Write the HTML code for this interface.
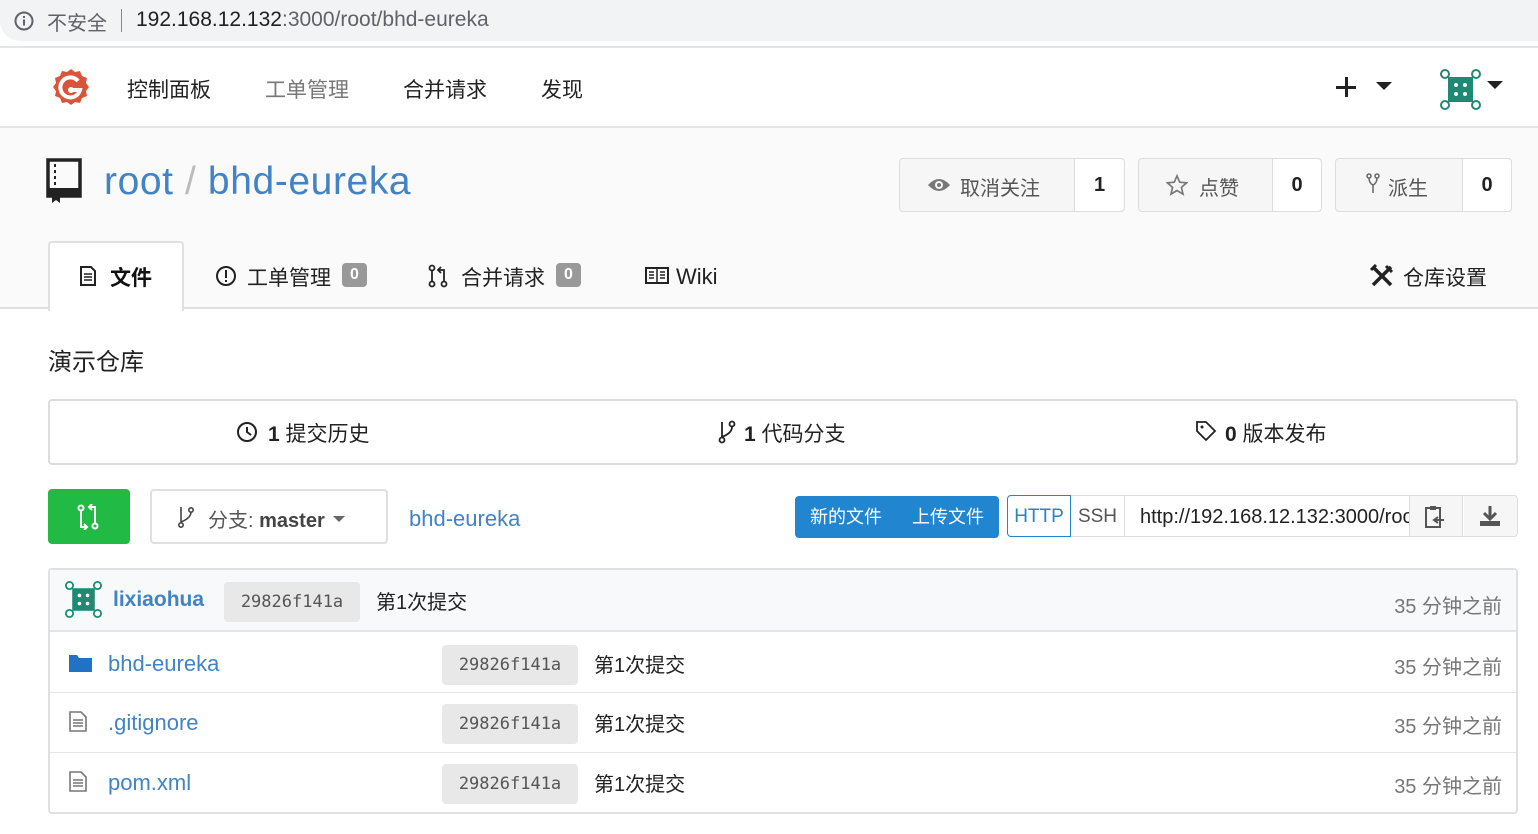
<!DOCTYPE html>
<html><head><meta charset="utf-8"><style>
*{box-sizing:border-box;margin:0;padding:0}
body{width:1538px;height:834px;overflow:hidden;background:#fff;font-family:"Liberation Sans","Noto Sans CJK SC",sans-serif;color:#333;position:relative}
.a{position:absolute;white-space:nowrap}
.blue{color:#4183c4}
.box{position:absolute;border:1px solid #ddd;border-radius:4px}
.sha{position:absolute;background:#e8e8e8;border-radius:4px;color:#555;height:40px;line-height:40px;text-align:center;width:136px;font-family:"DejaVu Sans Mono","Liberation Mono",monospace;font-size:17px}
.msg{font-size:20px;color:#222}
.time{font-size:20px;color:#777;right:38px}
</style></head><body>
<div class="a" style="left:0;top:0;width:1538px;height:41px;background:#f1f3f4;border-radius:0 0 0 20px"></div>
<div class="a" style="left:0;top:46px;width:1538px;height:2px;background:#e5e5e5"></div>
<svg class="a" style="left:13px;top:10px" width="22" height="22" viewBox="0 0 22 22"><circle cx="11" cy="11" r="8.5" fill="none" stroke="#5f6368" stroke-width="2"/><rect x="10" y="9.5" width="2" height="6" fill="#5f6368"/><rect x="10" y="6" width="2" height="2" fill="#5f6368"/></svg>
<div class="a" style="left:47px;top:7px;font-size:20px;color:#5f6368">不安全</div>
<div class="a" style="left:121px;top:9px;width:1px;height:23px;background:#888"></div>
<div class="a" style="left:136px;top:8px;font-size:21px;color:#202124">192.168.12.132<span style="color:#5f6368">:3000/root/bhd-eureka</span></div>
<svg class="a" style="left:50px;top:67px" width="42" height="42" viewBox="0 0 42 42"><path d="M21 2l4 3 5-1 2 5 5 2-1 5 3 4-3 4 1 5-5 2-2 5-5-1-4 3-4-3-5 1-2-5-5-2 1-5-3-4 3-4-1-5 5-2 2-5 5 1z" fill="#d9553a"/><path d="M28 14a10 10 0 1 0 2 9h-9" fill="none" stroke="#fff" stroke-width="4"/><circle cx="21" cy="23" r="3" fill="#fff"/></svg>
<div class="a" style="left:127px;top:74px;font-size:21px;color:#222">控制面板</div>
<div class="a" style="left:265px;top:74px;font-size:21px;color:#777">工单管理</div>
<div class="a" style="left:403px;top:74px;font-size:21px;color:#222">合并请求</div>
<div class="a" style="left:541px;top:74px;font-size:21px;color:#222">发现</div>
<div class="a" style="left:1336px;top:86px;width:20px;height:3px;background:#222"></div>
<div class="a" style="left:1344.5px;top:77px;width:3px;height:20px;background:#222"></div>
<div class="a" style="left:1376px;top:82px;border:8px solid transparent;border-top:8px solid #222;border-bottom:0"></div>
<svg class="a" style="left:1440px;top:69px" width="41" height="41" viewBox="0 0 41 41"><rect x="8" y="8" width="25" height="25" fill="#1e8a73"/><g fill="#1e8a73"><circle cx="5" cy="5" r="5"/><circle cx="36" cy="5" r="5"/><circle cx="5" cy="36" r="5"/><circle cx="36" cy="36" r="5"/></g><g fill="#fff"><circle cx="5" cy="5" r="3"/><circle cx="36" cy="5" r="3"/><circle cx="5" cy="36" r="3"/><circle cx="36" cy="36" r="3"/><circle cx="16" cy="16" r="2"/><circle cx="25" cy="16" r="2"/><circle cx="16" cy="25" r="2"/><circle cx="25" cy="25" r="2"/></g></svg>
<div class="a" style="left:1487px;top:81px;border:8px solid transparent;border-top:8px solid #222;border-bottom:0"></div>
<div class="a" style="left:0;top:126px;width:1538px;height:183px;background:#fafafa;border-top:2px solid #e4e4e4;border-bottom:2px solid #e0e0e0"></div>
<svg class="a" style="left:46px;top:158px" width="36" height="46" viewBox="0 0 36 46"><rect x="2" y="2" width="32" height="36" fill="none" stroke="#222" stroke-width="3.5"/><rect x="2" y="30" width="32" height="8" fill="#222"/><rect x="8" y="6" width="2" height="3" fill="#222"/><rect x="8" y="12" width="2" height="3" fill="#222"/><rect x="8" y="18" width="2" height="3" fill="#222"/><rect x="8" y="24" width="2" height="3" fill="#222"/><path d="M6 36h8v9l-4-3-4 3z" fill="#222"/></svg>
<div class="a blue" style="left:104px;top:160px;font-size:39px;letter-spacing:0.6px">root <span style="color:#bbb">/</span> bhd-eureka</div>
<div class="box" style="left:899px;top:158px;width:226px;height:54px;background:#f6f6f6"></div>
<div class="a" style="left:1074px;top:159px;width:50px;height:52px;background:#fff;border-left:1px solid #ddd;border-radius:0 4px 4px 0;font-size:20px;font-weight:bold;text-align:center;line-height:52px;color:#222">1</div>
<svg class="a" style="left:927px;top:177px" width="24" height="16" viewBox="0 0 24 16"><path d="M1 8Q12-4 23 8Q12 20 1 8z" fill="#777"/><circle cx="12" cy="8" r="4" fill="#f6f6f6"/><circle cx="12" cy="8" r="2" fill="#777"/></svg>
<div class="a" style="left:960px;top:172px;font-size:20px;color:#555">取消关注</div>
<div class="box" style="left:1138px;top:158px;width:184px;height:54px;background:#f6f6f6"></div>
<div class="a" style="left:1272px;top:159px;width:49px;height:52px;background:#fff;border-left:1px solid #ddd;border-radius:0 4px 4px 0;font-size:20px;font-weight:bold;text-align:center;line-height:52px;color:#222">0</div>
<svg class="a" style="left:1166px;top:174px" width="22" height="22" viewBox="0 0 24 24"><path d="M12 2l3 7 7.5.6-5.7 5 1.8 7.4L12 18l-6.6 4 1.8-7.4-5.7-5L9 9z" fill="none" stroke="#777" stroke-width="1.8"/></svg>
<div class="a" style="left:1199px;top:172px;font-size:20px;color:#555">点赞</div>
<div class="box" style="left:1335px;top:158px;width:177px;height:54px;background:#f6f6f6"></div>
<div class="a" style="left:1462px;top:159px;width:49px;height:52px;background:#fff;border-left:1px solid #ddd;border-radius:0 4px 4px 0;font-size:20px;font-weight:bold;text-align:center;line-height:52px;color:#222">0</div>
<svg class="a" style="left:1366px;top:173px" width="14" height="22" viewBox="0 0 14 22"><circle cx="3" cy="3" r="2" fill="none" stroke="#666" stroke-width="1.5"/><circle cx="11" cy="3" r="2" fill="none" stroke="#666" stroke-width="1.5"/><path d="M3 5q0 5 4 7q4-2 4-7M7 12v8" fill="none" stroke="#666" stroke-width="1.5"/></svg>
<div class="a" style="left:1388px;top:172px;font-size:20px;color:#555">派生</div>
<div class="a" style="left:48px;top:241px;width:136px;height:70px;background:#fff;border:2px solid #e0e0e0;border-bottom:none;border-radius:4px 4px 0 0"></div>
<svg class="a" style="left:79px;top:266px" width="18" height="20" viewBox="0 0 18 20"><path d="M2 1h10l4 4v14H2z" fill="none" stroke="#222" stroke-width="2"/><path d="M5 8h8M5 11h8M5 14h8" stroke="#222" stroke-width="1.5"/></svg>
<div class="a" style="left:110px;top:262px;font-size:21px;font-weight:bold;color:#111">文件</div>
<svg class="a" style="left:215px;top:265px" width="22" height="22" viewBox="0 0 22 22"><circle cx="11" cy="11" r="9" fill="none" stroke="#222" stroke-width="2"/><rect x="10" y="5" width="2" height="8" fill="#222"/><rect x="10" y="15" width="2" height="2" fill="#222"/></svg>
<div class="a" style="left:247px;top:262px;font-size:21px;color:#222">工单管理</div>
<div class="a" style="left:342px;top:263px;width:25px;height:24px;background:#999;border-radius:4px;color:#fff;font-weight:bold;font-size:16px;text-align:center;line-height:24px">0</div>
<svg class="a" style="left:428px;top:264px" width="20" height="24" viewBox="0 0 20 24"><circle cx="4" cy="4" r="2.5" fill="none" stroke="#222" stroke-width="1.8"/><circle cx="4" cy="20" r="2.5" fill="none" stroke="#222" stroke-width="1.8"/><circle cx="16" cy="20" r="2.5" fill="none" stroke="#222" stroke-width="1.8"/><path d="M4 7v10M16 17V6h-5M13 3l-3 3 3 3" fill="none" stroke="#222" stroke-width="1.8"/></svg>
<div class="a" style="left:461px;top:262px;font-size:21px;color:#222">合并请求</div>
<div class="a" style="left:556px;top:263px;width:25px;height:24px;background:#999;border-radius:4px;color:#fff;font-weight:bold;font-size:16px;text-align:center;line-height:24px">0</div>
<svg class="a" style="left:645px;top:267px" width="24" height="17" viewBox="0 0 24 17"><rect x="1" y="1" width="22" height="15" fill="none" stroke="#222" stroke-width="2"/><path d="M12 1v15M4 5h5M4 8h5M4 11h5M15 5h5M15 8h5M15 11h5" stroke="#222" stroke-width="1.5"/></svg>
<div class="a" style="left:676px;top:264px;font-size:22px;color:#222">Wiki</div>
<svg class="a" style="left:1370px;top:264px" width="24" height="24" viewBox="0 0 24 24"><path d="M3 3l18 18M21 3L3 21" stroke="#222" stroke-width="3.5"/><path d="M16 2l6 6M1 6l5-5" stroke="#222" stroke-width="3"/></svg>
<div class="a" style="left:1403px;top:262px;font-size:21px;color:#222">仓库设置</div>
<div class="a" style="left:48px;top:342px;font-size:24px;color:#222">演示仓库</div>
<div class="box" style="left:48px;top:399px;width:1470px;height:66px;border:2px solid #ddd"></div>
<svg class="a" style="left:236px;top:421px" width="22" height="22" viewBox="0 0 22 22"><circle cx="11" cy="11" r="9" fill="none" stroke="#222" stroke-width="2"/><path d="M11 6v5l4 3" fill="none" stroke="#222" stroke-width="2"/></svg>
<div class="a" style="left:268px;top:418px;font-size:21px;color:#222"><b>1</b> 提交历史</div>
<svg class="a" style="left:718px;top:420px" width="18" height="24" viewBox="0 0 18 24"><circle cx="4" cy="20" r="2.5" fill="none" stroke="#222" stroke-width="1.8"/><circle cx="14" cy="4" r="2.5" fill="none" stroke="#222" stroke-width="1.8"/><path d="M4 2v15M14 7q0 6-10 10" fill="none" stroke="#222" stroke-width="1.8"/></svg>
<div class="a" style="left:744px;top:418px;font-size:21px;color:#222"><b>1</b> 代码分支</div>
<svg class="a" style="left:1195px;top:420px" width="22" height="22" viewBox="0 0 22 22"><path d="M2 2h9l9 9-9 9-9-9z" fill="none" stroke="#222" stroke-width="1.8"/><circle cx="7" cy="7" r="1.5" fill="#222"/></svg>
<div class="a" style="left:1225px;top:418px;font-size:21px;color:#222"><b>0</b> 版本发布</div>
<div class="a" style="left:48px;top:489px;width:82px;height:55px;background:#21ba45;border-radius:4px"></div>
<svg class="a" style="left:76px;top:504px" width="24" height="26" viewBox="0 0 24 26"><circle cx="5" cy="4" r="2.5" fill="none" stroke="#fff" stroke-width="2"/><circle cx="19" cy="22" r="2.5" fill="none" stroke="#fff" stroke-width="2"/><path d="M5 7v16h6M8 20l3 3-3 3M19 19V3h-6M16 0l-3 3 3 3" fill="none" stroke="#fff" stroke-width="2"/></svg>
<div class="box" style="left:150px;top:489px;width:238px;height:55px;border:2px solid #e0e0e0"></div>
<svg class="a" style="left:178px;top:506px" width="16" height="22" viewBox="0 0 16 22"><circle cx="3" cy="19" r="2.2" fill="none" stroke="#444" stroke-width="1.6"/><circle cx="13" cy="4" r="2.2" fill="none" stroke="#444" stroke-width="1.6"/><path d="M3 1v15M13 6q0 6-10 10" fill="none" stroke="#444" stroke-width="1.6"/></svg>
<div class="a" style="left:208px;top:504px;font-size:20px;color:#555">分支: <b style="color:#444">master</b></div>
<div class="a" style="left:333px;top:516px;border:6px solid transparent;border-top:6px solid #666;border-bottom:0"></div>
<div class="a blue" style="left:409px;top:506px;font-size:22px">bhd-eureka</div>
<div class="a" style="left:795px;top:496px;width:204px;height:42px;background:#2185d0;border-radius:4px;color:#fff;font-size:18px;line-height:42px"><span style="margin-left:15px">新的文件</span><span style="margin-left:30px">上传文件</span></div>
<div class="a" style="left:1007px;top:495px;width:511px;height:42px;border:1px solid #ddd;border-radius:4px"></div>
<div class="a" style="left:1007px;top:495px;width:64px;height:42px;border:1px solid #2185d0;border-radius:4px 0 0 4px;color:#2185d0;font-size:19px;line-height:42px;text-align:center;background:#fff">HTTP</div>
<div class="a" style="left:1071px;top:496px;width:54px;height:40px;color:#555;font-size:19px;line-height:42px;text-align:center;border-right:1px solid #ddd">SSH</div>
<div class="a" style="left:1125px;top:496px;width:285px;height:40px;overflow:hidden;color:#222;font-size:20px;line-height:42px;padding-left:15px;border-right:1px solid #ddd">http://192.168.12.132:3000/root/bhd-eureka.git</div>
<div class="a" style="left:1410px;top:496px;width:53px;height:40px;background:#f6f6f6;border-right:1px solid #ddd"></div>
<svg class="a" style="left:1424px;top:505px" width="22" height="24" viewBox="0 0 22 24"><rect x="2" y="3" width="14" height="19" fill="none" stroke="#555" stroke-width="2"/><rect x="6" y="1" width="6" height="4" fill="#555"/><path d="M10 15h10M14 12l-4 3 4 3" fill="none" stroke="#555" stroke-width="2"/></svg>
<div class="a" style="left:1464px;top:496px;width:53px;height:40px;background:#f6f6f6;border-radius:0 4px 4px 0"></div>
<svg class="a" style="left:1479px;top:505px" width="22" height="22" viewBox="0 0 22 22"><path d="M11 1v12M5 8l6 6 6-6" fill="none" stroke="#555" stroke-width="3"/><rect x="1" y="16" width="20" height="5" fill="#555"/></svg>
<div class="box" style="left:48px;top:568px;width:1470px;height:246px;border:2px solid #e0e0e0"></div>
<div class="a" style="left:50px;top:570px;width:1466px;height:62px;background:#f8f9fa;border-bottom:2px solid #e4e4e4"></div>
<svg class="a" style="left:65px;top:581px" width="37" height="37" viewBox="0 0 41 41"><rect x="8" y="8" width="25" height="25" fill="#1e8a73"/><g fill="#1e8a73"><circle cx="5" cy="5" r="5"/><circle cx="36" cy="5" r="5"/><circle cx="5" cy="36" r="5"/><circle cx="36" cy="36" r="5"/></g><g fill="#fff"><circle cx="5" cy="5" r="3"/><circle cx="36" cy="5" r="3"/><circle cx="5" cy="36" r="3"/><circle cx="36" cy="36" r="3"/><circle cx="16" cy="16" r="2"/><circle cx="25" cy="16" r="2"/><circle cx="16" cy="25" r="2"/><circle cx="25" cy="25" r="2"/></g></svg>
<div class="a blue" style="left:113px;top:588px;font-size:21px;font-weight:bold">lixiaohua</div>
<div class="sha" style="left:224px;top:582px">29826f141a</div>
<div class="a msg" style="left:376px;top:586px">第1次提交</div>
<div class="a time" style="top:590px;right:36px">35 分钟之前</div>
<div class="a" style="left:50px;top:692px;width:1466px;height:1px;background:#e4e4e4"></div>
<div class="a" style="left:50px;top:752px;width:1466px;height:1px;background:#e4e4e4"></div>
<svg class="a" style="left:69px;top:653px" width="23" height="19" viewBox="0 0 23 19"><path d="M0 2h8l2 3h13v14H0z" fill="#2272c3"/></svg>
<div class="a blue" style="left:108px;top:651px;font-size:22px">bhd-eureka</div>
<div class="sha" style="left:442px;top:645px">29826f141a</div>
<div class="a msg" style="left:594px;top:649px">第1次提交</div>
<div class="a time" style="top:651px;right:36px">35 分钟之前</div>
<svg class="a" style="left:69px;top:711px" width="18" height="21" viewBox="0 0 18 21"><path d="M1 1h11l5 5v14H1z" fill="none" stroke="#777" stroke-width="1.6"/><path d="M4 9h10M4 12h10M4 15h10" stroke="#777" stroke-width="1.4"/></svg>
<div class="a blue" style="left:108px;top:710px;font-size:22px">.gitignore</div>
<div class="sha" style="left:442px;top:704px">29826f141a</div>
<div class="a msg" style="left:594px;top:708px">第1次提交</div>
<div class="a time" style="top:710px;right:36px">35 分钟之前</div>
<svg class="a" style="left:69px;top:771px" width="18" height="21" viewBox="0 0 18 21"><path d="M1 1h11l5 5v14H1z" fill="none" stroke="#777" stroke-width="1.6"/><path d="M4 9h10M4 12h10M4 15h10" stroke="#777" stroke-width="1.4"/></svg>
<div class="a blue" style="left:108px;top:770px;font-size:22px">pom.xml</div>
<div class="sha" style="left:442px;top:764px">29826f141a</div>
<div class="a msg" style="left:594px;top:768px">第1次提交</div>
<div class="a time" style="top:770px;right:36px">35 分钟之前</div>
</body></html>
